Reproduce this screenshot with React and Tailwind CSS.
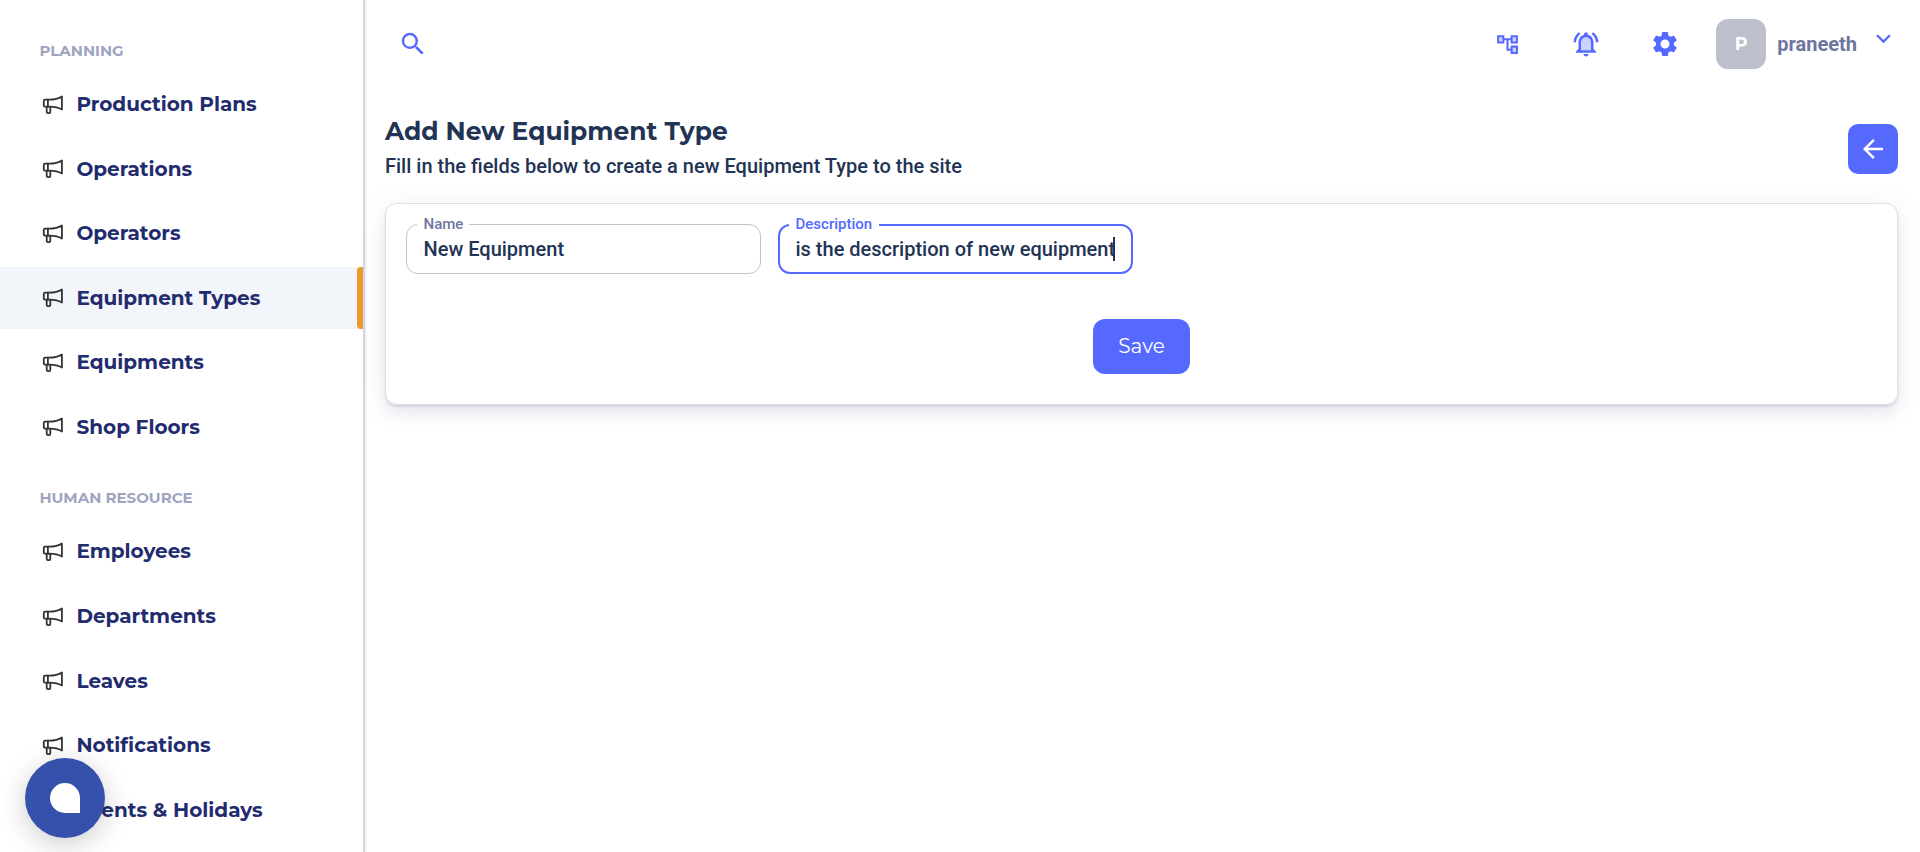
import { MdSearch, MdSettings, MdKeyboardArrowDown, MdArrowBack } from "react-icons/md";

const heading = "font-[Montserrat,Inter,sans-serif]";

function Megaphone() {
  return (
    <svg width="22" height="22" viewBox="0 0 22 22" fill="none" stroke="#333" strokeWidth="1.8" strokeLinejoin="round" strokeLinecap="round" className="mt-px shrink-0">
      <path d="M3 5.7h4.2c5 0 9.3-1 12.7-3.2v13c-3.400-2-7.700-2.800-12.700-2.800H3a1.200 1.200 0 0 1-1.200-1.200V6.900a1.200 1.200 0 0 1 1.200-1.200z" />
      <path d="M5.900 5.700v7M4.700 12.800v5a1.300 1.300 0 0 0 1.300 1.300h1.300a1 1 0 0 0 1-1v-5.300" />
    </svg>
  );
}

function TreeIcon() {
  return (
    <svg width="25" height="25" viewBox="0 0 24 24" fill="currentColor">
      <path opacity=".3" d="M4 5h3v4H4zM17 5h3v4h-3zM17 15h3v4h-3z" />
      <path d="M22 11V3h-7v3H9V3H2v8h7V8h2v10h4v3h7v-8h-7v3h-2V8h2v3h7zM7 9H4V5h3v4zm10 6h3v4h-3v-4zm0-10h3v4h-3V5z" />
    </svg>
  );
}

function BellIcon() {
  return (
    <svg width="30" height="30" viewBox="0 0 24 24" fill="currentColor" className="ml-[51px]">
      <path opacity=".3" d="M12 6.5c-2.49 0-4 2.02-4 4.5v6h8v-6c0-2.48-1.51-4.5-4-4.5z" />
      <path d="M12 22c1.1 0 2-.9 2-2h-4c0 1.1.9 2 2 2zm6-6v-5c0-3.07-1.63-5.64-4.5-6.32V4c0-.83-.67-1.5-1.5-1.5s-1.5.67-1.5 1.5v.68C7.64 5.36 6 7.92 6 11v5l-2 2v1h16v-1l-2-2zm-2 1H8v-6c0-2.48 1.51-4.5 4-4.5s4 2.02 4 4.5v6zM7.58 4.08L6.15 2.65C3.75 4.48 2.17 7.3 2.03 10.5h2c.15-2.65 1.51-4.97 3.55-6.42zm12.39 6.42h2c-.15-3.2-1.73-6.02-4.12-7.85l-1.42 1.43c2.02 1.45 3.39 3.77 3.54 6.42z" />
    </svg>
  );
}

function Item({ label, active }) {
  return (
    <li className={`mb-[2.6px] flex h-[62px] items-center pl-[42px] ${active ? "bg-[#f2f5fa]" : ""}`}>
      <Megaphone />
      <span className="ml-[12.4px] flex-1 whitespace-nowrap text-[20px] font-bold text-[#222b6e]">{label}</span>
      {active && <span className="h-full w-[6px] rounded-l-[4px] bg-[#ed9b28]" />}
    </li>
  );
}

const planning = ["Production Plans", "Operations", "Operators", "Equipment Types", "Equipments", "Shop Floors"];
const human = ["Employees", "Departments", "Leaves", "Notifications", "Events & Holidays"];

function Field({ label, value, focused }) {
  return (
    <fieldset className={`-mt-[9px] h-[59px] w-[355px] min-w-0 shrink-0 rounded-[12px] ${focused ? "border-2 border-[#5569ff] px-[9px]" : "border border-[#c4c4c4] px-[10px]"}`}>
      <legend className={`pl-[6.5px] text-[15px] font-medium ${focused ? "h-[20px] pr-[7px] leading-[18px] text-[#5569ff]" : "h-[19px] pr-[6px] leading-[19px] text-[#6e759f]"}`}>{label}</legend>
      <div className={`flex items-center pl-[6.5px] text-[20px] leading-[28px] font-medium whitespace-nowrap text-[#223354] ${focused ? "" : "pt-px"}`}>
        <span>{value}</span>
        {focused && <span className="-ml-[2px] h-6 w-[2px] shrink-0 bg-[#223354]" />}
      </div>
    </fieldset>
  );
}

export default function App() {
  return (
    <div className="relative flex h-[852px] w-full overflow-hidden bg-white font-[Roboto,sans-serif]">
      <aside className={`mr-px w-[364px] shrink-0 overflow-hidden border-r border-[#d3d4e2] pt-[36px] shadow-[2px_0_3px_rgba(159,162,191,0.18),1px_0_1px_rgba(159,162,191,0.32)] ${heading}`}>
        <h2 className="mb-[8px] pl-[39.400px] text-[15px] leading-[29px] font-bold text-[#9ea4c1]">PLANNING</h2>
        <ul>{planning.map((l) => <Item key={l} label={l} active={l === "Equipment Types"} />)}</ul>
        <h2 className="mt-[25.5px] mb-[8px] pl-[39.400px] text-[15px] leading-[29px] font-bold text-[#9ea4c1]">HUMAN RESOURCE</h2>
        <ul>{human.map((l) => <Item key={l} label={l} />)}</ul>
      </aside>
      <main className="min-w-0 flex-1 pr-[22px] pl-[20px]">
        <header className="flex h-[88px] items-center text-[#5569ff]">
          <MdSearch size={30} className="ml-[13px]" />
          <div className="ml-auto flex items-center">
            <TreeIcon />
            <BellIcon />
            <MdSettings size={30} className="ml-[49px]" />
            <div className={`ml-[36px] flex size-[50px] items-center justify-center rounded-[12px] bg-[#bdc0cc] text-[17.5px] font-bold text-white ${heading}`}>P</div>
            <span className="ml-[11px] text-[20px] font-bold text-[#6e759f]">praneeth</span>
            <MdKeyboardArrowDown size={29} className="mt-[-11px] ml-[12px]" />
          </div>
        </header>
        <section className="flex h-[115px] items-start justify-between pt-[27px]">
          <div>
            <h1 className={`text-[24.95px] leading-[33px] font-bold text-[#223354] ${heading}`}>Add New Equipment Type</h1>
            <p className="mt-[4px] text-[20px] leading-[28px] font-medium text-[#223354]">Fill in the fields below to create a new Equipment Type to the site</p>
          </div>
          <button className="mt-[9px] flex size-[50px] items-center justify-center rounded-[10px] bg-[#5569ff] text-white"><MdArrowBack size={30} /></button>
        </section>
        <section className="flex h-[202px] flex-col rounded-[12px] border border-[#dedfe3] px-[20px] pt-[20px] shadow-[0_9px_16px_rgba(159,162,191,0.18),0_2px_2px_rgba(159,162,191,0.32),0_2px_24px_rgba(159,162,191,0.12)]">
          <div className="flex gap-[17px]">
            <Field label="Name" value="New Equipment" />
            <Field label="Description" value="is the description of new equipment" focused />
          </div>
          <button className={`mt-[45px] h-[55px] w-[97px] self-center rounded-[12px] bg-[#5569ff] pb-px text-[20px] text-white ${heading}`}>Save</button>
        </section>
      </main>
      <button aria-label="Chat" className="absolute top-[758px] left-[25px] flex size-[80px] items-center justify-center rounded-full bg-[#3651ac] shadow-[0_6px_28px_rgba(0,0,0,0.2)]">
        <span className="size-[30px] rounded-[15px_15px_0_15px] bg-white" />
      </button>
    </div>
  );
}
